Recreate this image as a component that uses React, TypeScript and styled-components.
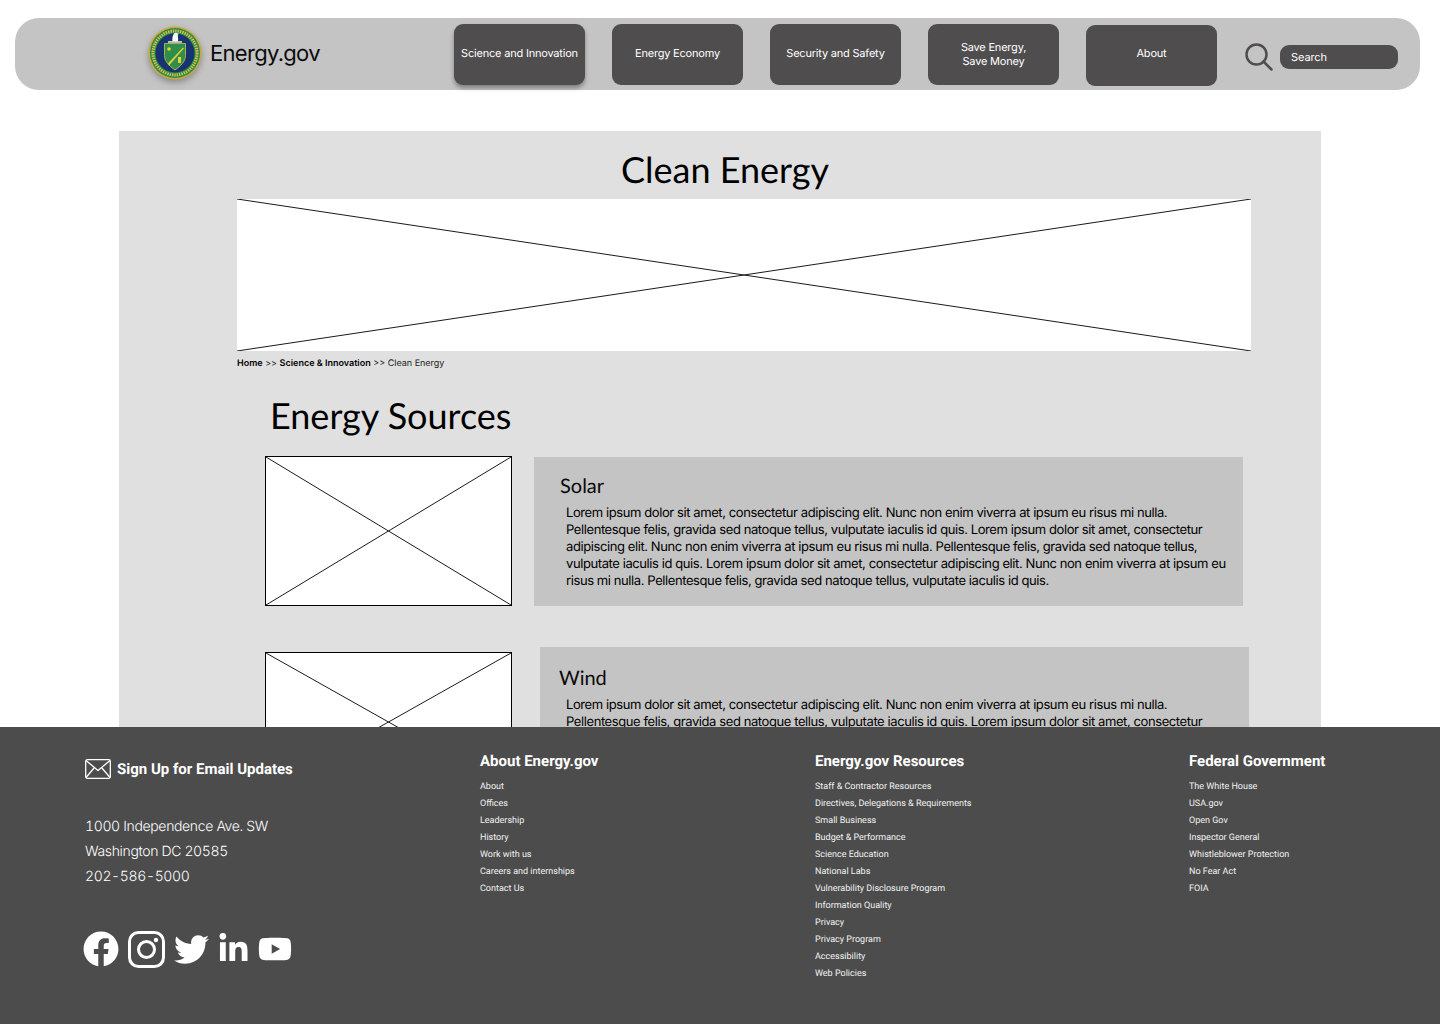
import React from "react";
import styled, { createGlobalStyle } from "styled-components";
import { FaFacebook, FaTwitter, FaLinkedinIn, FaYoutube } from "react-icons/fa";

const GlobalStyle = createGlobalStyle`
  html, body {
    margin: 0;
    padding: 0;
    background: #ffffff;
    text-rendering: geometricPrecision;
  }
  * {
    box-sizing: border-box;
  }
`;

const Page = styled.div`
  width: 1440px;
  height: 1024px;
  display: flex;
  flex-direction: column;
  overflow: hidden;
  background: #ffffff;
  font-family: Inter, "Liberation Sans", sans-serif;
`;

const Header = styled.header`
  flex: none;
  width: 1405px;
  height: 72px;
  margin: 18px 0 0 15px;
  padding: 6px 0 0 133px;
  display: flex;
  align-items: flex-start;
  background: #c4c4c4;
  border-radius: 24px;
`;

const Brand = styled.div`
  flex: none;
  width: 306px;
  height: 60px;
  display: flex;
  align-items: center;
  gap: 8px;
`;

const Seal = styled.svg`
  flex: none;
  width: 54px;
  height: 54px;
  margin-top: -2px;
  filter: drop-shadow(0 3px 3px rgba(0, 0, 0, 0.3));
`;

const BrandName = styled.span`
  font-size: 22px;
  letter-spacing: -0.7px;
  color: #0a0a0a;
`;

const Nav = styled.nav`
  flex: none;
  display: flex;
  gap: 27px;
`;

const NavButton = styled.div<{ $raised?: boolean; $low?: boolean; $lift?: number }>`
  width: 131px;
  height: 61px;
  margin-top: ${(p) => (p.$low ? "1px" : "0")};
  padding-bottom: ${(p) => p.$lift ?? 4}px;
  display: flex;
  align-items: center;
  justify-content: center;
  text-align: center;
  background: #4f4d4e;
  border-radius: 9px;
  color: #ffffff;
  font-size: 11px;
  line-height: 14px;
  letter-spacing: -0.2px;
  box-shadow: ${(p) => (p.$raised ? "0 3px 4px rgba(0, 0, 0, 0.35)" : "none")};
`;

const SearchGroup = styled.div`
  flex: none;
  margin: 19px 0 0 28px;
  display: flex;
  align-items: center;
  gap: 7px;
`;

const SearchIcon = styled.svg`
  width: 28px;
  height: 28px;
`;

const SearchBox = styled.div`
  width: 118px;
  height: 24px;
  padding-left: 11px;
  display: flex;
  align-items: center;
  background: #4f4d4e;
  border-radius: 9px;
  color: #ffffff;
  font-size: 11px;
  letter-spacing: -0.1px;
`;

const Main = styled.main`
  flex: 1;
  min-height: 0;
  width: 1202px;
  margin: 41px 0 0 119px;
  padding: 0 70px 0 118px;
  background: #e0e0e0;
  overflow: hidden;
`;

const PageTitle = styled.h1`
  margin: 0;
  height: 68px;
  padding: 8px 38px 0 0;
  display: flex;
  align-items: center;
  justify-content: center;
  font-family: Lato, sans-serif;
  font-weight: 400;
  font-size: 36px;
  color: #000000;
`;

const Placeholder = styled.svg<{ $outlined?: boolean }>`
  display: block;
  background: #ffffff;
  border: ${(p) => (p.$outlined ? "1px solid #000000" : "none")};
`;

const Hero = styled(Placeholder)`
  width: 1014px;
  height: 152px;
`;

const Breadcrumb = styled.div`
  height: 12px;
  margin-top: 7px;
  font-size: 9px;
  line-height: 12px;
  color: #1a1a1a;

  b {
    font-weight: 600;
    color: #000000;
  }
`;

const SectionTitle = styled.h2`
  margin: 23px 0 19px 33px;
  font-family: Lato, sans-serif;
  font-weight: 400;
  font-size: 36px;
  line-height: 44px;
  color: #000000;
`;

const SourceList = styled.div`
  margin-left: 28px;
  display: flex;
  flex-direction: column;
  gap: 41px;
`;

const SourceRow = styled.article<{ $gap: number }>`
  display: flex;
  align-items: flex-start;
  gap: ${(p) => p.$gap}px;
`;

const SourceImage = styled(Placeholder)<{ $top: number; $height: number }>`
  flex: none;
  width: 247px;
  height: ${(p) => p.$height}px;
  margin-top: ${(p) => p.$top}px;
`;

const SourcePanel = styled.div<{ $top: number; $inset: number; $pad: number }>`
  flex: none;
  width: 709px;
  height: 149px;
  margin-top: ${(p) => p.$top}px;
  padding: ${(p) => p.$pad}px 0 0 ${(p) => p.$inset}px;
  background: #c4c4c4;
`;

const SourceName = styled.h3`
  margin: 0 0 7px;
  font-family: Lato, sans-serif;
  font-weight: 400;
  font-size: 20px;
  line-height: 24px;
  color: #0a0a0a;
`;

const SourceText = styled.p<{ $indent: number }>`
  width: 664px;
  margin: 0 0 0 ${(p) => p.$indent}px;
  font-size: 13px;
  line-height: 17px;
  letter-spacing: -0.41px;
  color: #000000;
`;

const Footer = styled.footer`
  flex: none;
  height: 297px;
  padding: 0 0 0 85px;
  display: flex;
  align-items: flex-start;
  background: #4c4c4c;
  color: #ffffff;
  font-family: Roboto, sans-serif;
`;

const ContactColumn = styled.div`
  flex: none;
  width: 395px;
  padding-top: 31px;
`;

const SignUp = styled.div`
  display: flex;
  align-items: center;
  gap: 6px;
  font-weight: 700;
  font-size: 15px;
  line-height: 22px;
`;

const EnvelopeIcon = styled.svg`
  width: 26px;
  height: 20px;
`;

const Address = styled.address`
  margin-top: 34px;
  font-family: Inter, sans-serif;
  font-style: normal;
  font-weight: 300;
  font-size: 14px;
  line-height: 25px;
  letter-spacing: -0.35px;
  font-variant-numeric: tabular-nums;
`;

const Socials = styled.div`
  margin: 42px 0 0 -2px;
  display: flex;
  align-items: center;
  height: 36px;
  gap: 9px;
`;

const SocialSlot = styled.span<{ $size: number; $width: number }>`
  flex: none;
  width: ${(p) => p.$width}px;
  display: flex;
  justify-content: center;
  font-size: ${(p) => p.$size}px;
  line-height: 0;
`;

const LinkColumn = styled.div<{ $width?: number }>`
  flex: none;
  width: ${(p) => (p.$width ? `${p.$width}px` : "auto")};
  padding-top: 23px;
`;

const ColumnTitle = styled.h4`
  margin: 0 0 7px;
  font-weight: 700;
  font-size: 15px;
  line-height: 22px;
`;

const LinkList = styled.ul`
  margin: 0;
  padding: 0;
  list-style: none;
`;

const LinkItem = styled.li`
  font-size: 9px;
  line-height: 17px;
  color: #f2f2f2;
`;

const lorem =
  "Lorem ipsum dolor sit amet, consectetur adipiscing elit. Nunc non enim viverra at ipsum eu risus mi nulla. Pellentesque felis, gravida sed natoque tellus, vulputate iaculis id quis. Lorem ipsum dolor sit amet, consectetur adipiscing elit. Nunc non enim viverra at ipsum eu risus mi nulla. Pellentesque felis, gravida sed natoque tellus, vulputate iaculis id quis. Lorem ipsum dolor sit amet, consectetur adipiscing elit. Nunc non enim viverra at ipsum eu risus mi nulla. Pellentesque felis, gravida sed natoque tellus, vulputate iaculis id quis.";

// only the first two lines of this panel are in view above the footer
const loremVisible =
  "Lorem ipsum dolor sit amet, consectetur adipiscing elit. Nunc non enim viverra at ipsum eu risus mi nulla. Pellentesque felis, gravida sed natoque tellus, vulputate iaculis id quis. Lorem ipsum dolor sit amet, consectetur";

const footerColumns = [
  {
    title: "About Energy.gov",
    width: 335,
    links: ["About", "Offices", "Leadership", "History", "Work with us", "Careers and internships", "Contact Us"],
  },
  {
    title: "Energy.gov Resources",
    width: 374,
    links: [
      "Staff & Contractor Resources",
      "Directives, Delegations & Requirements",
      "Small Business",
      "Budget & Performance",
      "Science Education",
      "National Labs",
      "Vulnerability Disclosure Program",
      "Information Quality",
      "Privacy",
      "Privacy Program",
      "Accessibility",
      "Web Policies",
    ],
  },
  {
    title: "Federal Government",
    links: [
      "The White House",
      "USA.gov",
      "Open Gov",
      "Inspector General",
      "Whistleblower Protection",
      "No Fear Act",
      "FOIA",
    ],
  },
];

function CrossLines() {
  return (
    <>
      <line x1="0" y1="0" x2="100" y2="100" stroke="#1a1a1a" strokeWidth="1" vectorEffect="non-scaling-stroke" />
      <line x1="100" y1="0" x2="0" y2="100" stroke="#1a1a1a" strokeWidth="1" vectorEffect="non-scaling-stroke" />
    </>
  );
}

function DoeSeal() {
  return (
    <Seal viewBox="0 0 54 54">
      <circle cx="27" cy="27" r="26.5" fill="#c9a93a" />
      <circle cx="27" cy="27" r="25" fill="#2f8a45" />
      <circle cx="27" cy="27" r="22" fill="none" stroke="#d8c04e" strokeWidth="3" strokeDasharray="1.4 1" />
      <circle cx="27" cy="27" r="19.500" fill="#16346f" />
      <path d="M16.500 17.500h21v12c0 6-5 10.500-10.500 14.500-5.500-4-10.500-8.500-10.500-14.500z" fill="#2f8f4a" stroke="#d8c04e" strokeWidth="0.8" />
      <path d="M19.500 38 35 21.500l1 .8L21 39.500z" fill="#e5cf3c" />
      <circle cx="21" cy="23" r="1.800" fill="#e5cf3c" />
      <rect x="30" y="31" width="3" height="6" fill="#e5cf3c" />
      <path d="M24.500 15.500c-.5-3 .2-6 1.500-8 1-1 3-1.200 3.500-.2l1.500.6-1.300.7c.3 2 .6 4.900.3 6.900z" fill="#ffffff" />
      <rect x="20" y="15.200" width="14" height="1.500" fill="#e8e8e8" />
    </Seal>
  );
}

function InstagramGlyph() {
  return (
    <svg width="37" height="37" viewBox="0 0 37 37" fill="none" stroke="#ffffff">
      <rect x="1.500" y="1.500" width="34" height="34" rx="9" strokeWidth="3" />
      <circle cx="18.500" cy="18.500" r="8" strokeWidth="3" />
      <circle cx="28" cy="9" r="2.200" fill="#ffffff" stroke="none" />
    </svg>
  );
}

export default function App() {
  return (
    <Page>
      <GlobalStyle />
      <Header>
        <Brand>
          <DoeSeal />
          <BrandName>Energy.gov</BrandName>
        </Brand>
        <Nav>
          <NavButton $raised>Science and Innovation</NavButton>
          <NavButton>Energy Economy</NavButton>
          <NavButton>Security and Safety</NavButton>
          <NavButton $lift={2}>
            Save Energy,
            <br />
            Save Money
          </NavButton>
          <NavButton $low $lift={6}>
            About
          </NavButton>
        </Nav>
        <SearchGroup>
          <SearchIcon viewBox="0 0 28 28" fill="none" stroke="#4f4d4e" strokeWidth="2.500" strokeLinecap="round">
            <circle cx="11.500" cy="11.500" r="10" />
            <line x1="18.500" y1="18.500" x2="26.500" y2="26.500" />
          </SearchIcon>
          <SearchBox>Search</SearchBox>
        </SearchGroup>
      </Header>

      <Main>
        <PageTitle>Clean Energy</PageTitle>
        <Hero viewBox="0 0 100 100" preserveAspectRatio="none">
          <CrossLines />
        </Hero>
        <Breadcrumb>
          <b>Home</b> &gt;&gt; <b>Science &amp; Innovation</b> &gt;&gt; Clean Energy
        </Breadcrumb>
        <SectionTitle>Energy Sources</SectionTitle>
        <SourceList>
          <SourceRow $gap={22}>
            <SourceImage $outlined $top={0} $height={150} viewBox="0 0 100 100" preserveAspectRatio="none">
              <CrossLines />
            </SourceImage>
            <SourcePanel $top={1} $inset={26} $pad={17}>
              <SourceName>Solar</SourceName>
              <SourceText $indent={6}>{lorem}</SourceText>
            </SourcePanel>
          </SourceRow>
          <SourceRow $gap={28}>
            <SourceImage $outlined $top={5} $height={140} viewBox="0 0 100 100" preserveAspectRatio="none">
              <CrossLines />
            </SourceImage>
            <SourcePanel $top={0} $inset={19} $pad={19}>
              <SourceName>Wind</SourceName>
              <SourceText $indent={7}>{loremVisible}</SourceText>
            </SourcePanel>
          </SourceRow>
        </SourceList>
      </Main>

      <Footer>
        <ContactColumn>
          <SignUp>
            <EnvelopeIcon viewBox="0 0 26 20" fill="none" stroke="#ffffff" strokeWidth="1.300" strokeLinejoin="round">
              <rect x="0.700" y="0.700" width="24.600" height="18.600" rx="1.500" />
              <path d="M1 1.500 13 11.500 25 1.500M1 18.500 9.500 8.500M25 18.500 16.500 8.500" />
            </EnvelopeIcon>
            Sign Up for Email Updates
          </SignUp>
          <Address>
            1000 Independence Ave. SW
            <br />
            Washington DC 20585
            <br />
            202-586-5000
          </Address>
          <Socials>
            <SocialSlot $size={36} $width={36}>
              <FaFacebook />
            </SocialSlot>
            <SocialSlot $size={36} $width={37}>
              <InstagramGlyph />
            </SocialSlot>
            <SocialSlot $size={35} $width={35}>
              <FaTwitter />
            </SocialSlot>
            <SocialSlot $size={32} $width={31}>
              <FaLinkedinIn />
            </SocialSlot>
            <SocialSlot $size={34} $width={34}>
              <FaYoutube />
            </SocialSlot>
          </Socials>
        </ContactColumn>
        {footerColumns.map((column) => (
          <LinkColumn key={column.title} $width={column.width}>
            <ColumnTitle>{column.title}</ColumnTitle>
            <LinkList>
              {column.links.map((link) => (
                <LinkItem key={link}>{link}</LinkItem>
              ))}
            </LinkList>
          </LinkColumn>
        ))}
      </Footer>
    </Page>
  );
}
